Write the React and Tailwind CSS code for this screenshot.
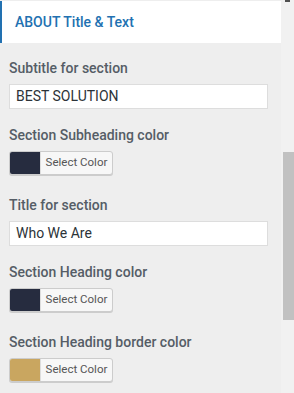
const Field = ({ label, value }) => (
  <div className="mb-[16px]">
    <div className="h-[20px] leading-[20px] text-[14px] font-medium text-[#555d66]">{label}</div>
    <div className="mt-[6px] h-[25px] w-[259px] border border-[#dddddd] bg-white px-[6px] flex items-center text-[14px] text-[#2c3338]">
      {value}
    </div>
  </div>
)

const ColorField = ({ label, swatch }) => (
  <div className="mb-[20px]">
    <div className="h-[20px] leading-[20px] text-[14px] font-medium text-[#555d66]">{label}</div>
    <div className="mt-[6px] flex h-[24px] w-[104px] overflow-hidden rounded-[3px] border border-[#cccccc] bg-[#f7f7f7] shadow-[0_1px_0_#cccccc]">
      <div className={`w-[30px] h-full ${swatch}`}></div>
      <div className="flex-1 flex items-center justify-center text-[11.5px] text-[#555555] border-l border-[#dddddd]">Select Color</div>
    </div>
  </div>
)

export default function App() {
  return (
    <div className="flex h-[393px] w-[294px] overflow-hidden bg-[#eeeeee] font-['Roboto',sans-serif]">
      <div className="w-[281px] pt-[1px]">
        <div className="flex h-[42px] items-center border-l-2 border-[#2271b1] bg-white pl-[13px] text-[14px] font-medium text-[#2271b1]">
          ABOUT Title &amp; Text
        </div>
        <div className="px-[9px] pt-[15px]">
          <Field label="Subtitle for section" value="BEST SOLUTION" />
          <ColorField label="Section Subheading color" swatch="bg-[#262c3f]" />
          <Field label="Title for section" value="Who We Are" />
          <ColorField label="Section Heading color" swatch="bg-[#262c3f]" />
          <ColorField label="Section Heading border color" swatch="bg-[#c9a660]" />
        </div>
      </div>
      <div className="relative w-[13px] bg-[#f1f1f1]">
        <div className="absolute left-[4px] top-0 h-[2px] w-[5px] bg-[#505050]"></div>
        <div className="absolute left-[2px] top-[152px] h-[168px] w-[11px] bg-[#c1c1c1]"></div>
      </div>
    </div>
  )
}
